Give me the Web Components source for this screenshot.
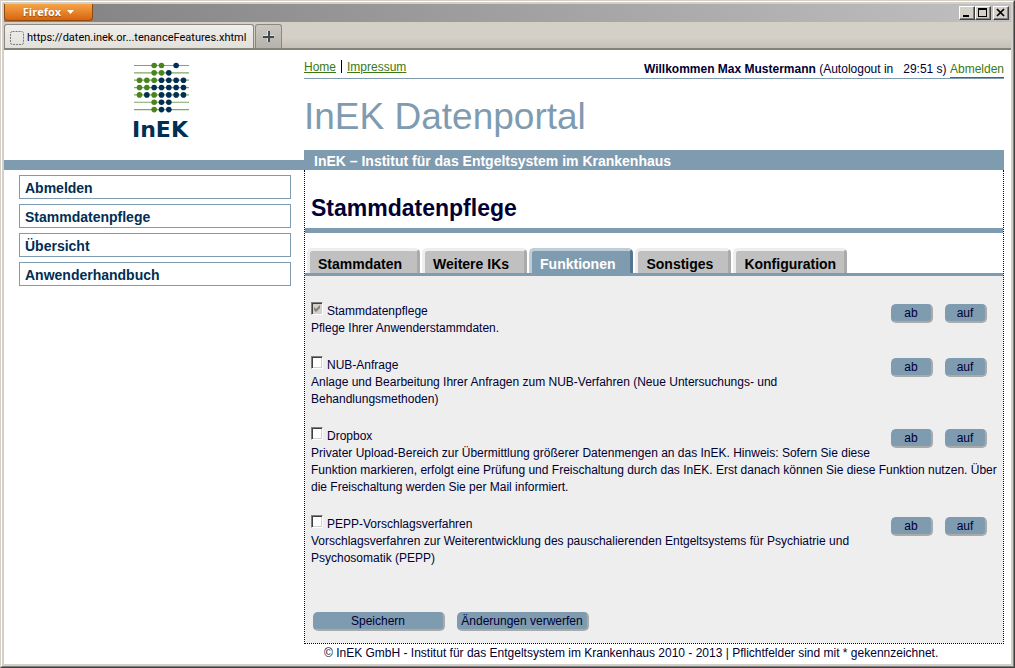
<!DOCTYPE html>
<html lang="de">
<head>
<meta charset="utf-8">
<title>InEK Datenportal</title>
<style>
  :root {
    --steel: #7f9bb0;
    --ink: #000033;
    --navy: #002e54;
    --green: #3c7814;
    --chrome: #d4d0c8;
    --panel: #eeeeee;
  }
  body {
    margin: 0;
    font: 12px/17px "Liberation Sans", Arial, sans-serif;
    color: var(--ink);
  }
</style>
</head>
<body>
<browser-window>
  <browser-tab slot="tabs">https://daten.inek.or...tenanceFeatures.xhtml</browser-tab>
  <portal-page>
    <inek-logo slot="logo"></inek-logo>
    <side-nav slot="nav">
      <nav-entry>Abmelden</nav-entry>
      <nav-entry>Stammdatenpflege</nav-entry>
      <nav-entry>Übersicht</nav-entry>
      <nav-entry>Anwenderhandbuch</nav-entry>
    </side-nav>
    <meta-bar slot="meta" user="Max Mustermann" remaining="29:51"></meta-bar>
    <span slot="title">InEK Datenportal</span>
    <span slot="subtitle">InEK – Institut für das Entgeltsystem im Krankenhaus</span>
    <span slot="heading">Stammdatenpflege</span>
    <tab-strip slot="tabs">
      <tab-item>Stammdaten</tab-item>
      <tab-item>Weitere IKs</tab-item>
      <tab-item active>Funktionen</tab-item>
      <tab-item>Sonstiges</tab-item>
      <tab-item last>Konfiguration</tab-item>
    </tab-strip>
    <feature-item name="Stammdatenpflege" locked>Pflege Ihrer Anwenderstammdaten.</feature-item>
    <feature-item name="NUB-Anfrage">Anlage und Bearbeitung Ihrer Anfragen zum NUB-Verfahren (Neue Untersuchungs- und Behandlungsmethoden)</feature-item>
    <feature-item name="Dropbox">Privater Upload-Bereich zur Übermittlung größerer Datenmengen an das InEK. Hinweis: Sofern Sie diese Funktion markieren, erfolgt eine Prüfung und Freischaltung durch das InEK. Erst danach können Sie diese Funktion nutzen. Über die Freischaltung werden Sie per Mail informiert.</feature-item>
    <feature-item name="PEPP-Vorschlagsverfahren">Vorschlagsverfahren zur Weiterentwicklung des pauschalierenden Entgeltsystems für Psychiatrie und Psychosomatik (PEPP)</feature-item>
    <push-button slot="actions" wide>Speichern</push-button>
    <push-button slot="actions" wide>Änderungen verwerfen</push-button>
    <span slot="footer">© InEK GmbH - Institut für das Entgeltsystem im Krankenhaus 2010 - 2013 | Pflichtfelder sind mit * gekennzeichnet.</span>
  </portal-page>
</browser-window>

<script>
const define = (name, html, setup) => {
  const template = document.createElement("template");
  template.innerHTML = html;
  customElements.define(name, class extends HTMLElement {
    constructor() {
      super();
      this.attachShadow({ mode: "open" }).append(template.content.cloneNode(true));
    }
    connectedCallback() {
      if (setup) setup(this, this.shadowRoot);
    }
  });
};

define("browser-window", `
<style>
  :host {
    display: flex;
    box-sizing: border-box;
    min-height: 100vh;
    border: 1px solid;
    border-color: var(--chrome) #404040 #404040 var(--chrome);
  }
  .frame {
    flex: 1;
    min-width: 0;
    display: flex;
    flex-direction: column;
    border: 1px solid;
    border-color: #fff #808080 #808080 #fff;
    padding: 2px;
    background: var(--chrome);
  }
  .title {
    display: flex;
    justify-content: space-between;
    height: 18px;
    background: linear-gradient(90deg, #808080, #c0c0c0);
  }
  button { box-sizing: border-box; margin: 0; padding: 0; }
  .menu {
    display: flex;
    align-items: center;
    justify-content: center;
    gap: 6px;
    width: 89px;
    height: 17px;
    border: 1px solid #8f4a10;
    border-top: 0;
    border-radius: 0 0 4px 4px;
    background: linear-gradient(#f5a548, #d9640f);
    color: #fff;
    font: bold 11px/16px "Open Sans", sans-serif;
    text-shadow: 0 1px 1px #8f4a10;
  }
  .controls { display: flex; padding: 2px 2px 0 0; }
  .controls button {
    width: 16px;
    height: 14px;
    border: 1px solid;
    border-color: #fff #404040 #404040 #fff;
    background: var(--chrome);
    box-shadow: inset -1px -1px #808080;
    display: flex;
  }
  .controls button:last-child { margin-left: 2px; }
  .strip {
    display: flex;
    align-items: flex-end;
    gap: 1px;
    height: 28px;
    box-sizing: border-box;
    border-bottom: 2px solid #85827c;
    background: linear-gradient(#d4d0c8 60%, #c4c0b8);
  }
  .add {
    width: 27px;
    height: 24px;
    border: 1px solid #8b8882;
    border-bottom: 0;
    border-radius: 3px 3px 0 0;
    background: linear-gradient(#cbc8c1, #b5b2ac);
    display: grid;
    place-items: center;
  }
  main { flex: 1; background: #fff; }
</style>
<div class="frame">
  <div class="title">
    <button class="menu">Firefox
      <svg width="7" height="4" viewBox="0 0 7 4"><path d="M0 0H7L3.500 4Z" fill="#fff"/></svg>
    </button>
    <div class="controls">
      <button aria-label="Minimieren"><svg width="14" height="12"><path d="M3 8h6v2H3z"/></svg></button>
      <button aria-label="Maximieren"><svg width="14" height="12"><path d="M2 1h9v9H2zM3 3v6h7V3z" fill-rule="evenodd"/></svg></button>
      <button aria-label="Schließen"><svg width="14" height="12"><path d="M3 2l7 7M10 2l-7 7" stroke="#000" stroke-width="1.700"/></svg></button>
    </div>
  </div>
  <div class="strip">
    <slot name="tabs"></slot>
    <button class="add" aria-label="Neuer Tab"><svg width="11" height="11"><path d="M4 0h3v4h4v3H7v4H4V7H0V4h4z" fill="#fff" opacity=".5"/><path d="M5 0h2v5h4v2H7v4H5V7H0V5h5z" fill="#3c4a58"/></svg></button>
  </div>
  <main><slot></slot></main>
</div>`);

define("browser-tab", `
<style>
  :host {
    display: flex;
    align-items: center;
    gap: 3px;
    box-sizing: border-box;
    width: 250px;
    height: 24px;
    padding: 2px 2px 0 5px;
    border: 1px solid #8b8882;
    border-bottom: 0;
    border-radius: 3px 3px 0 0;
    background: linear-gradient(#f0efec, #e2e0db);
    color: #000;
    font: 11px/16px Roboto, sans-serif;
    white-space: nowrap;
  }
  svg { flex: none; }
</style>
<svg width="14" height="14"><rect x=".5" y=".5" width="13" height="13" rx="2" fill="none" stroke="#777" stroke-dasharray="2 1"/></svg>
<slot></slot>`);

define("portal-page", `
<style>
  :host {
    display: grid;
    grid-template-columns: 300px minmax(0, 1fr);
    padding-right: 7px;
  }
  .brand {
    box-sizing: border-box;
    height: 120px;
    padding: 12px 0 0 16px;
    border-bottom: 10px solid var(--steel);
    display: flex;
    justify-content: center;
  }
  .head { display: flex; flex-direction: column; justify-content: space-between; }
  h1 {
    margin: 0;
    padding-top: 4px;
    color: var(--steel);
    font-weight: normal;
    font-size: 37px;
    line-height: 60px;
  }
  .sub {
    margin: 0;
    padding: 2px 10px 0;
    background: var(--steel);
    color: #fff;
    font-weight: bold;
    font-size: 14px;
    line-height: 18px;
  }
  .box {
    border: 1px dotted var(--ink);
    border-top: 0;
    display: flex;
    flex-direction: column;
  }
  h2 {
    margin: 0;
    padding: 18px 6px 0;
    border-bottom: 5px solid var(--steel);
    font-size: 23px;
    line-height: 40px;
  }
  .tabs { padding-top: 15px; }
  .panel { background: var(--panel); padding: 26px 4px 12px 6px; }
  .actions { display: flex; gap: 12px; padding: 26px 2px 0; }
  footer { grid-column: 2; padding: 0 20px; line-height: 18px; }
</style>
<div class="brand"><slot name="logo"></slot></div>
<header class="head">
  <slot name="meta"></slot>
  <h1><slot name="title"></slot></h1>
  <p class="sub"><slot name="subtitle"></slot></p>
</header>
<slot name="nav"></slot>
<section class="box">
  <h2><slot name="heading"></slot></h2>
  <div class="tabs"><slot name="tabs"></slot></div>
  <div class="panel">
    <slot></slot>
    <div class="actions"><slot name="actions"></slot></div>
  </div>
</section>
<footer><slot name="footer"></slot></footer>`);

define("inek-logo", `
<style>
  :host { display: block; }
  svg { display: block; }
  text { font: bold 22px "DejaVu Sans", sans-serif; }
</style>
<svg width="60" height="80" viewBox="0 0 60 80" role="img" aria-label="InEK">
  <g class="rows"></g>
  <text x="0" y="75" fill="#002e54">InEK</text>
</svg>`, (host, root) => {
  const rows = ["..gg.n.", "..ggn..", "gggnnnn", "ggnnnnn", "gngnnnn", "..gnn..", "..gnn.."];
  root.querySelector(".rows").innerHTML = rows.map((row, r) => {
    const y = 3.5 + r * 7.35;
    const dots = [...row].map((c, i) => c === "." ? "" :
      `<circle cx="${7.5 + i * 7.33}" cy="${y}" r="2.800" fill="${c === "g" ? "#4a841f" : "#002e54"}"/>`).join("");
    return `<path d="M2 ${y}H57" stroke="#7fa763" stroke-width="1.200"/>${dots}`;
  }).join("");
});

define("side-nav", `
<style>
  :host { display: block; }
  nav { display: grid; gap: 5px; padding: 5px 13px 0 15px; }
</style>
<nav><slot></slot></nav>`);

define("nav-entry", `
<style>
  :host { display: block; }
  a {
    display: block;
    padding: 2px 5px 0;
    border: 1px solid var(--steel);
    color: var(--navy);
    font-weight: bold;
    font-size: 14px;
    line-height: 20px;
    text-decoration: none;
  }
</style>
<a href="#"><slot></slot></a>`);

define("meta-bar", `
<style>
  :host {
    display: flex;
    justify-content: space-between;
    border-bottom: 1px solid var(--steel);
  }
  a { color: var(--green); }
  .links { display: flex; gap: 5px; padding-top: 9px; }
  .sep { width: 1px; height: 13px; margin-top: 1px; background: #000; }
  .user { padding-top: 11px; line-height: 16px; white-space: pre; }
  .user a { display: inline-block; text-decoration: none; border-bottom: 1px solid; }
</style>
<nav class="links"><a href="#">Home</a><i class="sep"></i><a href="#">Impressum</a></nav>
<div class="user"><b>Willkommen <span class="name"></span></b> (Autologout in &nbsp; <span class="time"></span> s) <a href="#">Abmelden</a></div>`,
(host, root) => {
  root.querySelector(".name").textContent = host.getAttribute("user");
  root.querySelector(".time").textContent = host.getAttribute("remaining");
});

define("tab-strip", `
<style>
  :host {
    display: flex;
    gap: 2px;
    padding: 0 2px;
    border-bottom: 3px solid var(--steel);
  }
</style>
<slot></slot>`);

define("tab-item", `
<style>
  :host { display: block; }
  button {
    display: block;
    margin: 0;
    padding: 4px 15px 0 8px;
    border: 3px solid;
    border-color: #eee #aaa #aaa #eee;
    border-bottom: 0;
    border-radius: 5px 5px 0 0;
    background: #c0c0c0;
    color: #000;
    font: bold 14px/18px "Liberation Sans", Arial, sans-serif;
  }
  :host([active]) button {
    border-color: #bfcdd8 #54768f #54768f #bfcdd8;
    background: var(--steel);
    color: #fff;
  }
  :host([last]) button { padding-right: 8px; }
</style>
<button><slot></slot></button>`);

define("push-button", `
<style>
  :host { display: block; }
  button {
    display: block;
    box-sizing: border-box;
    min-width: 42px;
    margin: 0;
    padding: 0 4px 0 2px;
    border: 2px solid;
    border-color: var(--steel) #aaa #aaa var(--steel);
    border-radius: 5px;
    background: var(--steel);
    color: var(--ink);
    font: 12px/15px "Liberation Sans", Arial, sans-serif;
  }
  :host([wide]) button { min-width: 132px; }
</style>
<button><slot></slot></button>`);

define("feature-item", `
<style>
  :host { display: block; padding-bottom: 20px; }
  .buttons {
    float: right;
    display: flex;
    gap: 12px;
    padding: 2px 12px 0 18px;
  }
  label { display: flex; gap: 4px; padding-top: 1px; }
  input {
    appearance: none;
    box-sizing: border-box;
    width: 12px;
    height: 13px;
    margin: -1px 0 0;
    border: 1px solid;
    border-color: #808080 #fff #fff #808080;
    background: #fff;
    box-shadow: inset 1px 1px #404040, inset -1px -1px var(--chrome);
  }
  input:disabled {
    background: var(--chrome) url("data:image/svg+xml,%3Csvg xmlns='http://www.w3.org/2000/svg' width='10' height='11'%3E%3Cpath d='M2 4v3l2 2 4-4V2L4 6z' fill='%23808080'/%3E%3C/svg%3E") no-repeat;
  }
  p { margin: 0 0 -1px; }
</style>
<div class="buttons"><push-button>ab</push-button><push-button>auf</push-button></div>
<label><input type="checkbox"><span></span></label>
<p><slot></slot></p>`, (host, root) => {
  root.querySelector("label span").textContent = host.getAttribute("name");
  if (host.hasAttribute("locked")) {
    const box = root.querySelector("input");
    box.checked = true;
    box.disabled = true;
  }
});
</script>
</body>
</html>
